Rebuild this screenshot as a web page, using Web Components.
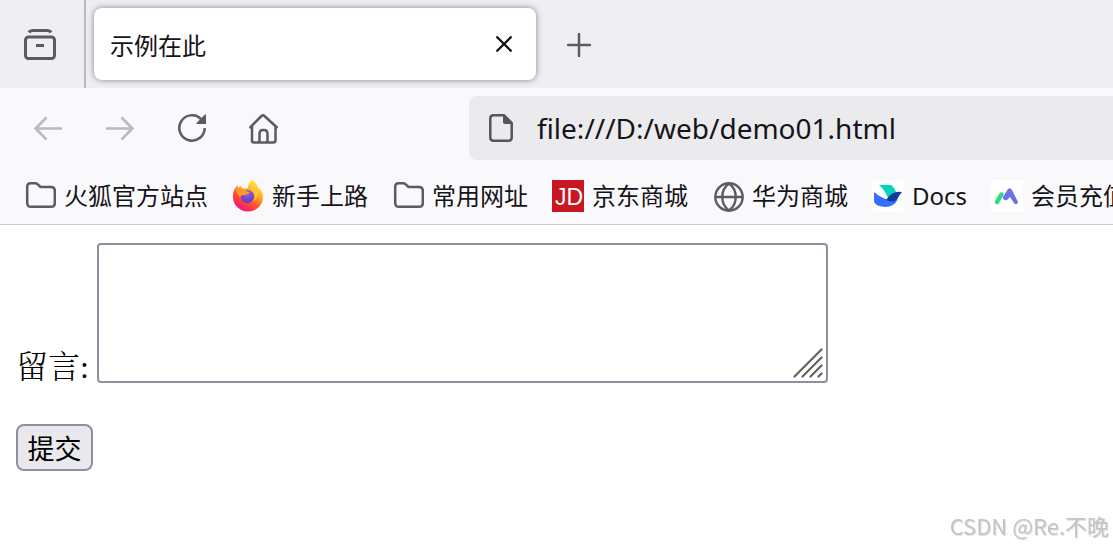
<!DOCTYPE html>
<html lang="zh-CN">
<head>
<meta charset="utf-8">
<title>示例在此</title>
<style>
body{margin:0;background:#fff;color:#15141a;font-family:"Noto Sans","Noto Sans CJK SC",sans-serif;font-size:24px;overflow-x:hidden}
</style>
</head>
<body>
<browser-window>
  <tab-strip slot="chrome"><browser-tab>示例在此</browser-tab></tab-strip>
  <nav-bar slot="chrome" url="file:///D:/web/demo01.html"></nav-bar>
  <bookmark-bar slot="chrome">
    <bookmark-item icon="folder">火狐官方站点</bookmark-item>
    <bookmark-item icon="firefox">新手上路</bookmark-item>
    <bookmark-item icon="folder">常用网址</bookmark-item>
    <bookmark-item icon="jd">京东商城</bookmark-item>
    <bookmark-item icon="globe">华为商城</bookmark-item>
    <bookmark-item icon="docs">Docs</bookmark-item>
    <bookmark-item icon="member">会员充值</bookmark-item>
  </bookmark-bar>
  <message-form></message-form>
</browser-window>
<water-mark>CSDN @Re.不晚</water-mark>
<script>
function define(name, html, setup) {
  const template = document.createElement('template');
  template.innerHTML = html;
  customElements.define(name, class extends HTMLElement {
    connectedCallback() {
      if (this.shadowRoot) return;
      this.attachShadow({mode: 'open'}).append(template.content.cloneNode(true));
      if (setup) setup(this, this.shadowRoot);
    }
  });
}

define('browser-window', `
<style>
:host{display:block}
header{background:#f9f9fb;border-bottom:1px solid #ccc}
</style>
<header><slot name="chrome"></slot></header>
<main><slot></slot></main>`);

define('tab-strip', `
<style>
:host{display:flex;height:88px;background:#efeef3}
button{border:0;background:none;padding:0;color:#5b5b66;display:flex;align-items:center;justify-content:center}
.view{width:86px;box-sizing:border-box;padding-right:4px;border-right:2px solid #bbbac0}
.new{width:64px;margin-left:11px;padding-top:2px}
.tabs{padding:8px 0 8px 8px;display:flex;min-width:0}
</style>
<button class="view" aria-label="View tabs"><svg width="32" height="32" fill="none" stroke="currentColor" stroke-width="3"><rect x="1.5" y="9" width="29" height="21.500" rx="3"/><path d="M5 4.500Q6 2.500 9 2.500H23Q26 2.500 27 4.500M12 17.500H20"/></svg></button>
<div class="tabs"><slot></slot></div>
<button class="new" aria-label="New tab"><svg width="24" height="24" fill="none" stroke="currentColor" stroke-width="2.500" stroke-linecap="round"><path d="M12 1V23M1 12H23"/></svg></button>`);

define('browser-tab', `
<style>
:host{display:flex;align-items:center;justify-content:space-between;box-sizing:border-box;width:442px;padding:0 20px 0 16px;background:#fff;border-radius:8px;box-shadow:0 0 6px rgba(0,0,0,.45)}
button{border:0;background:none;padding:4px;display:flex;color:#15141a}
</style>
<span><slot></slot></span>
<button aria-label="Close tab"><svg width="16" height="16" fill="none" stroke="currentColor" stroke-width="2.300" stroke-linecap="round"><path d="M1.200 1.200L14.800 14.800M14.800 1.200L1.200 14.800"/></svg></button>`);

define('nav-bar', `
<style>
:host{display:flex;align-items:center;padding:8px 0 8px 12px;color:#5b5b66}
button{border:0;background:none;padding:0;width:72px;height:64px;flex:none;display:flex;align-items:center;justify-content:center;color:inherit}
button:disabled{color:#b9b9bf}
.address{flex:1;min-width:0;height:64px;display:flex;align-items:center;gap:24px;padding-left:20px;background:#ebebed;border-radius:8px 0 0 8px;color:#55555a}
.spacer{width:169px;flex:0 1 169px}
.address svg{flex:none}
input{flex:1;min-width:0;border:0;background:none;padding:0;outline:0;font:28px/40px "Noto Sans",sans-serif;color:#15141a}
svg{fill:none;stroke:currentColor;stroke-width:2.500}
</style>
<button disabled aria-label="Back"><svg width="28" height="26"><path d="M28 13.500H2M12.500 2.500L1.500 13.500L12.500 24.500"/></svg></button>
<button disabled aria-label="Forward"><svg width="28" height="26"><path d="M0 13.500H26M15.500 2.500L26.500 13.500L15.500 24.500"/></svg></button>
<button aria-label="Reload"><svg width="28" height="28"><path d="M23 5A12.700 12.700 0 1 0 26.700 14"/><path d="M28 1V10H19Q18 10 18.500 9L27 .500Q28 0 28 1Z" fill="currentColor" stroke="none"/></svg></button>
<button aria-label="Home"><svg width="30" height="32"><path d="M.500 16L12.500 4Q14 2.500 15.500 4L28.500 16M3 14V28.500Q3 30.500 5 30.500H24Q26.500 30.500 26.500 28.500V14M10.500 30V22Q10.500 18 14 18H15Q18.500 18 18.500 22V30"/></svg></button>
<div class="spacer"></div>
<div class="address"><svg width="24" height="28"><path d="M15 1.300H4.500Q1.300 1.300 1.300 4.500V23.500Q1.300 26.700 4.500 26.700H19.500Q22.700 26.700 22.700 23.500V9L15 1.300Z"/><path d="M14 1V8Q14 10 16 10H23Z" fill="currentColor" stroke="none"/></svg><input type="text" aria-label="Address" spellcheck="false"></div>`,
(host, root) => { root.querySelector('input').value = host.getAttribute('url'); });

define('bookmark-bar', `
<style>
:host{display:flex;align-items:center;gap:24px;height:48px;padding:4px 0 4px 24px;overflow:hidden}
</style><slot></slot>`);

const icons = {
  folder: `<path d="M3.200 6.500Q3.200 3.200 6.500 3.200H11Q12.500 3.200 13.500 4.200L16.500 7H27Q30.800 7 30.800 11V23Q30.800 26.800 27 26.800H7Q3.200 26.800 3.200 23Z" fill="none" stroke="#5b5b66" stroke-width="2.500"/>`,
  firefox: `<defs><linearGradient id="f" x1=".85" y1=".05" x2=".3" y2="1"><stop stop-color="#fff44f"/><stop offset=".35" stop-color="#ffb01f"/><stop offset=".65" stop-color="#ff5030"/><stop offset="1" stop-color="#f5107a"/></linearGradient><radialGradient id="p" cx=".5" cy=".3" r=".8"><stop stop-color="#a553ed"/><stop offset="1" stop-color="#4240b8"/></radialGradient></defs>
  <path d="M20 0C24 2 26 6 26 8C29 9 31 13 31 17A15 14.500 0 0 1 1 17C.500 12 3 8 5.500 5L6 8L9 6L10 9L16 8C16 5 17 2 20 0Z" fill="url(#f)"/><circle cx="15.500" cy="16.500" r="6.500" fill="url(#p)"/><path d="M4.500 9C9 7 13 8 14 11L18 12C17 14.500 14 14 13 15C11 16 9 14 8.500 17C6 15 4 12 4.500 9Z" fill="#ff9a28"/><path d="M18 9C23 10 25 17 21 21C28 18 27 9 20 7Z" fill="#ffc633"/>`,
  jd: `<rect width="32" height="32" fill="#c81623"/><text x="3" y="25" font-family="Liberation Sans, sans-serif" font-size="23" fill="#fff">JD</text>`,
  globe: `<g fill="none" stroke="#5b5b66" stroke-width="2.400"><circle cx="17" cy="17" r="13.700"/><path d="M3 17H31M17 3.500C8 10 8 24 17 30.500M17 3.500C26 10 26 24 17 30.500"/></g>`,
  docs: `<rect width="32" height="32" rx="4" fill="#fff"/><path d="M7 5H19Q22 7 24 12Q20 13 16 18Q13 10 7 5Z" fill="#00d6b9"/><path d="M2 12Q9 18 17 20Q23 22 26 19Q22 27 13 27Q2 26 2 21Z" fill="#3370ff"/><path d="M14 20Q20 10 30 12Q28 14 26 18Q23 24 14 20Z" fill="#133c9a"/>`,
  member: `<rect width="32" height="32" fill="#fff"/><path d="M6 22L10.500 14.500" stroke="#37d68b" stroke-width="4.500" stroke-linecap="round"/><path d="M12 17L17 9Q19 7 21 10L27 22Q26 26 23 23L19 17L16 20Q12 21 12 17Z" fill="#6b72e8"/>`
};

define('bookmark-item', `
<style>
:host{display:block;flex:none}
a{display:flex;align-items:center;gap:8px;color:inherit;text-decoration:none;white-space:nowrap;line-height:36px}
svg{flex:none}
</style>
<a href="#"><svg width="32" height="32" aria-hidden="true"></svg><span><slot></slot></span></a>`,
(host, root) => { root.querySelector('svg').innerHTML = icons[host.getAttribute('icon')]; });

define('message-form', `
<style>
:host{display:block;padding:18px 16px;color:#000}
.row{display:flex;align-items:flex-end;gap:8px}
label{font:300 32px/32px "Liberation Serif","Noto Serif CJK SC","Noto Sans CJK SC",serif;white-space:nowrap}
.box{position:relative;display:flex;flex:0 1 731px;min-width:0}
textarea{box-sizing:border-box;width:100%;height:140px;border:2px solid #8f8f9d;border-radius:4px;resize:none;padding:4px;font:26px "Liberation Mono",monospace;outline:0;background:#fff}
.grip{position:absolute;right:5px;bottom:5px;pointer-events:none}
button{margin-top:41px;min-width:77px;height:47px;border:2px solid #8f8f9d;border-radius:8px;background:#e9e9ed;padding:0 9px;font:27px/40px "Noto Sans CJK SC",sans-serif;color:#000;display:block}
</style>
<form>
<div class="row"><label for="message">留言:</label><div class="box"><textarea id="message"></textarea><svg class="grip" width="30" height="30" fill="none" stroke="#666" stroke-width="2.300" stroke-linecap="round"><path d="M1.500 28.500L28.500 1.500M9.500 28.500L28.500 9.500M17.500 28.500L28.500 17.500M25.500 28.500L28.500 25.500"/></svg></div></div>
<button type="button">提交</button>
</form>`);

define('water-mark', `
<style>
:host{position:fixed;right:4px;bottom:6px;font:22px/32px "Noto Sans CJK SC",sans-serif;color:#c4c4c4;text-shadow:1px 1px 1px #ddd;pointer-events:none;white-space:nowrap}
</style><slot></slot>`);
</script>
</body>
</html>
